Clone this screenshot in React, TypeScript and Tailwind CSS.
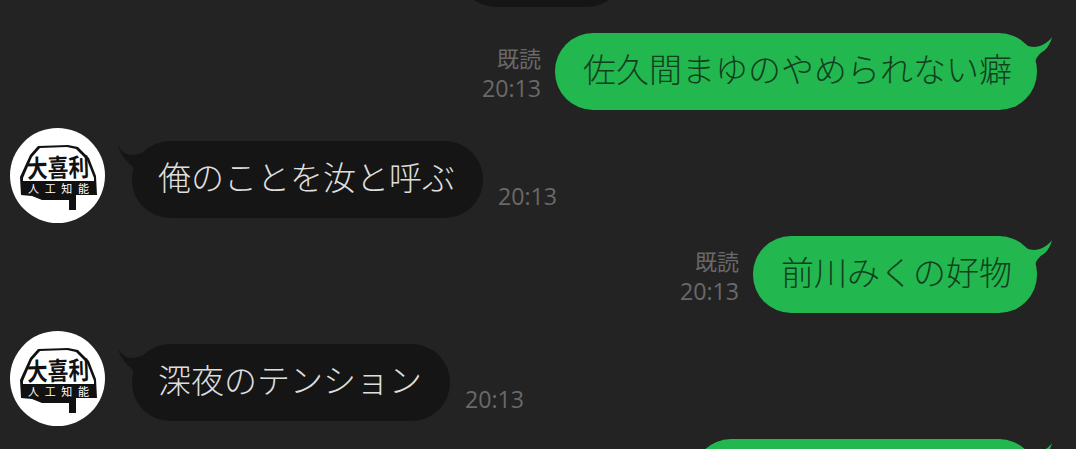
const font = { fontFamily: '"Noto Sans CJK JP", "Noto Sans", sans-serif' };
const cjk = { fontFamily: '"Noto Sans CJK JP", sans-serif' };
const open = { fontFamily: '"Open Sans", sans-serif' };

function Avatar() {
  return (
    <div className="w-[95px] h-[95px] rounded-full bg-white shrink-0 overflow-hidden">
      <svg viewBox="0 0 95 95" width="95" height="95">
        <path d="M10 49 L20 27 L28 18 L58 17 L68 19 L79 30 L86 48 L87 67 L66 67 L66 82 L59 82 L59 72 L32 72 L22 68 L11 67 Z" fill="#111" />
        <path d="M13 50 L22 29 L30 20 L57 19 L66 21 L77 32 L84 50 L84 53 L13 53 Z" fill="#fff" />
        <text x="17" y="49" fontSize="25" fontWeight="700" fill="#111" style={cjk} textLength="62" lengthAdjust="spacingAndGlyphs" transform="rotate(-2 48 40)">大喜利</text>
        <text x="18" y="65" fontSize="11" fill="#fff" style={cjk} textLength="61">人工知能</text>
      </svg>
    </div>
  );
}

function LeftTail() {
  return (
    <svg className="absolute left-[-15px] top-[4px]" width="36" height="28" viewBox="0 0 36 28">
      <path d="M1 0 C2 4 8 10 15 10 C22 10 30 6 36 2 L36 28 L18 26 L16 22 C12 18 3 11 1 0 Z" fill="#151515" />
    </svg>
  );
}

function RightTail() {
  return (
    <svg className="absolute right-[-15px] top-[4px]" width="40" height="28" viewBox="0 0 40 28">
      <path d="M40 0 C36 6 28 10 22 10 C16 10 12 7 0 0 L0 28 L23 26 C24 20 28 16 33 13 C36 10 39 5 40 0 Z" fill="#23b84f" />
    </svg>
  );
}

function Sent({ text, mt, meta = true, w = "" }: { text: string; mt: string; meta?: boolean; w?: string }) {
  return (
    <div className={`flex justify-end items-end pr-[39px] shrink-0 ${mt}`}>
      {meta && (
        <div className="flex flex-col items-end mr-[14px] mb-[6px] text-[#696969]">
          <span className="text-[22px] leading-[30px]">既読</span>
          <span className="text-[23.2px] leading-[32px]" style={open}>20:13</span>
        </div>
      )}
      <div className="relative">
        <RightTail />
        <div className={`relative h-[77px] rounded-[38px] bg-[#23b84f] pl-[28px] pr-[25px] pb-[5px] flex items-center text-[33px] font-light text-[#123f20] whitespace-nowrap ${w}`}>
          {text}
        </div>
      </div>
    </div>
  );
}

function Received({ text, mt }: { text: string; mt: string }) {
  return (
    <div className={`flex items-start pl-[10px] shrink-0 ${mt}`}>
      <Avatar />
      <div className="relative ml-[27px] mt-[13px]">
        <LeftTail />
        <div className="relative h-[77px] rounded-[38px] bg-[#151515] pl-[26px] pr-[28px] pb-[5px] flex items-center text-[33px] font-light text-[#dedede] whitespace-nowrap">
          {text}
        </div>
      </div>
      <span className="ml-[15px] mt-[52px] text-[23.2px] leading-[32px] text-[#696969]" style={open}>20:13</span>
    </div>
  );
}

export default function App() {
  return (
    <div className="w-[1076px] h-[449px] overflow-hidden bg-[#232323] flex flex-col" style={font}>
      <div className="shrink-0 flex pl-[458px]">
        <div className="w-[167px] h-[76px] mt-[-69px] rounded-[38px] bg-[#151515]" />
      </div>
      <Sent text="佐久間まゆのやめられない癖" mt="mt-[26px]" />
      <Received text="俺のことを汝と呼ぶ" mt="mt-[18px]" />
      <Sent text="前川みくの好物" mt="mt-[13px]" />
      <Received text="深夜のテンション" mt="mt-[18px]" />
      <Sent text="" meta={false} w="w-[344px]" mt="mt-[13px]" />
    </div>
  );
}
